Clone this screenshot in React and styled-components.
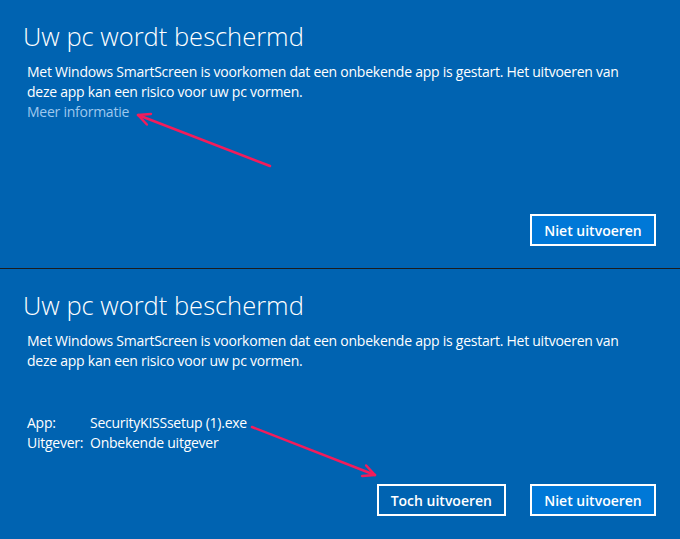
import React from 'react';
import styled, { createGlobalStyle } from 'styled-components';

const GlobalStyle = createGlobalStyle`
    html, body {
        margin: 0;
        padding: 0;
        background: #0063b1;
    }
    body {
        font-family: "Open Sans", "Noto Sans", sans-serif;
        color: #ffffff;
    }
`

const Screen = styled.div`
    position: relative;
    width: 680px;
    height: 539px;
    overflow: hidden;
    background: #0063b1;
    display: flex;
    flex-direction: column;
`

const Panel = styled.section`
    height: ${props => props.height}px;
    box-sizing: border-box;
    padding: 20px 24px ${props => props.bottom}px 23px;
    display: flex;
    flex-direction: column;
`

const Divider = styled.div`
    height: 1px;
    background: #1c1c1c;
`

const Title = styled.h1`
    margin: 0;
    font-size: 25.5px;
    line-height: 32px;
    font-weight: 300;
`

const Message = styled.p`
    margin: 10px 0 0 4px;
    max-width: 600px;
    font-size: 14px;
    line-height: 20px;
    letter-spacing: -0.25px;
    font-weight: 400;
`

const MoreLink = styled.a`
    margin-left: 4px;
    font-size: 14px;
    line-height: 20px;
    letter-spacing: -0.25px;
    color: #9fc8ee;
    text-decoration: none;
    align-self: flex-start;
`

const Details = styled.dl`
    margin: 42px 0 0 4px;
    display: grid;
    grid-template-columns: 63px auto;
    font-size: 14px;
    line-height: 20px;
    letter-spacing: -0.25px;
    dt, dd {
        margin: 0;
    }
`

const Actions = styled.div`
    margin-top: auto;
    display: flex;
    justify-content: flex-end;
    gap: 24px;
`

const Button = styled.button`
    box-sizing: border-box;
    height: 32px;
    min-width: ${props => props.width}px;
    padding: 0 12px;
    border: 2px solid #ffffff;
    background: ${props => props.primary ? '#0078d7' : 'transparent'};
    color: #ffffff;
    font-family: "Open Sans", "Noto Sans", sans-serif;
    font-size: 14px;
    font-weight: 600;
    cursor: pointer;
`

const Annotations = styled.svg`
    position: absolute;
    left: 0;
    top: 0;
    pointer-events: none;
`

const Arrow = ({ from, to }) => {
    const [x1, y1] = from;
    const [x2, y2] = to;
    const angle = Math.atan2(y1 - y2, x1 - x2);
    const len = 13;
    const spread = 0.45;
    const a = [x2 + len * Math.cos(angle - spread), y2 + len * Math.sin(angle - spread)];
    const b = [x2 + len * Math.cos(angle + spread), y2 + len * Math.sin(angle + spread)];
    return (
        <g stroke="#f31c5b" strokeWidth="2.5" strokeLinecap="round" strokeLinejoin="round" fill="none">
            <line x1={x1} y1={y1} x2={x2} y2={y2} />
            <polyline points={`${a[0]},${a[1]} ${x2},${y2} ${b[0]},${b[1]}`} />
        </g>
    )
}

const message = 'Met Windows SmartScreen is voorkomen dat een onbekende app is gestart. Het uitvoeren van deze app kan een risico voor uw pc vormen.';

const App = () => {
    return (
        <Screen>
            <GlobalStyle />
            <Panel height={268} bottom={22}>
                <Title>Uw pc wordt beschermd</Title>
                <Message>{message}</Message>
                <MoreLink href="#">Meer informatie</MoreLink>
                <Actions>
                    <Button primary width={126}>Niet uitvoeren</Button>
                </Actions>
            </Panel>
            <Divider />
            <Panel height={270} bottom={23}>
                <Title>Uw pc wordt beschermd</Title>
                <Message>{message}</Message>
                <Details>
                    <dt>App:</dt>
                    <dd>SecurityKISSsetup (1).exe</dd>
                    <dt>Uitgever:</dt>
                    <dd>Onbekende uitgever</dd>
                </Details>
                <Actions>
                    <Button width={129}>Toch uitvoeren</Button>
                    <Button primary width={126}>Niet uitvoeren</Button>
                </Actions>
            </Panel>
            <Annotations width="680" height="539">
                <Arrow from={[270, 166]} to={[138, 115]} />
                <Arrow from={[252, 427]} to={[375, 475]} />
            </Annotations>
        </Screen>
    )
}

export default App;
